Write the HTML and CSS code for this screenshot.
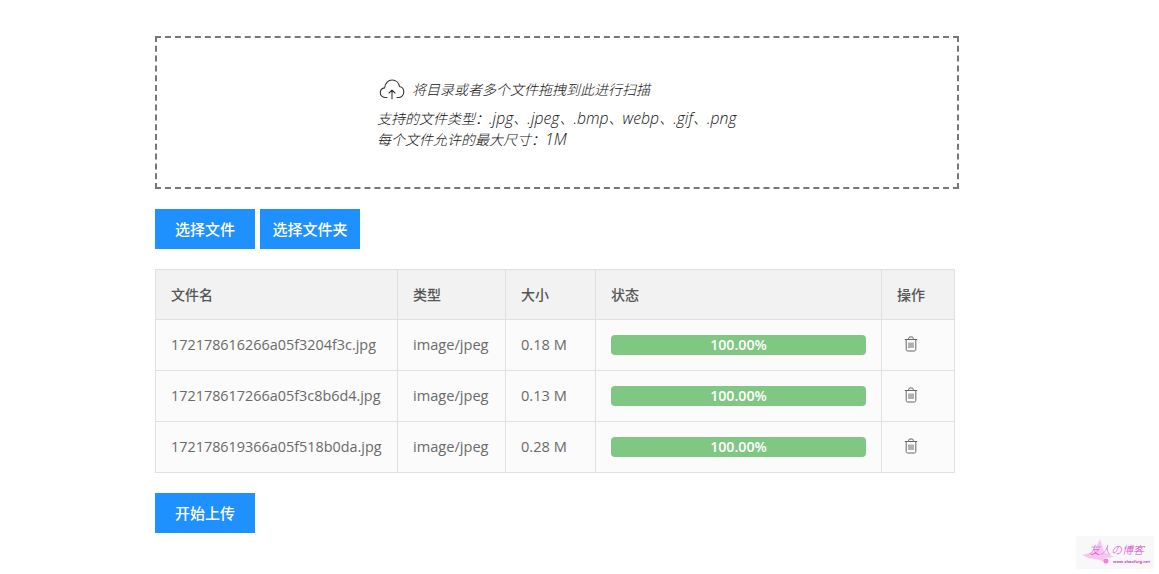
FILE: index.html
```html
<!DOCTYPE html>
<html lang="zh-CN">
<head>
<meta charset="utf-8">
<title>文件上传</title>
<link rel="stylesheet" href="styles.css">
</head>
<body>
<main class="page">
  <section class="drop">
    <div class="drop-inner">
      <p class="drop-title">
        <svg class="cloud" viewBox="0 0 26 22" width="26" height="22" fill="none" stroke="#333" stroke-width="1.1" stroke-linecap="round" stroke-linejoin="round"><path d="M8 19.500H6.500C3.500 19.500 1.300 17.400 1.300 14.700c0-2.500 1.800-4.400 4.300-4.800C6.100 5.300 9.300 2 13.200 2c3.700 0 6.700 2.800 7.300 6.500 2.600.5 4.300 2.700 4.300 5.400 0 3-2.300 5.600-5.300 5.600h-1.500"/><path d="M13 20.800v-8M10 15l3-2.800 3 2.800"/></svg>
        <span>将目录或者多个文件拖拽到此进行扫描</span>
      </p>
      <p class="drop-line">支持的文件类型：<span class="lat">.jpg</span>、<span class="lat">.jpeg</span>、<span class="lat">.bmp</span>、<span class="lat">webp</span>、<span class="lat">.gif</span>、<span class="lat">.png</span></p>
      <p class="drop-line">每个文件允许的最大尺寸：<span class="lat">1M</span></p>
    </div>
  </section>

  <div class="actions">
    <button class="btn" type="button">选择文件</button>
    <button class="btn" type="button">选择文件夹</button>
  </div>

  <table class="files">
    <colgroup>
      <col class="c-name"><col class="c-type"><col class="c-size"><col class="c-state"><col class="c-op">
    </colgroup>
    <thead>
      <tr><th>文件名</th><th>类型</th><th>大小</th><th>状态</th><th>操作</th></tr>
    </thead>
    <tbody>
      <tr>
        <td class="name">172178616266a05f3204f3c.jpg</td><td>image/jpeg</td><td>0.18 M</td>
        <td><div class="bar">100.00%</div></td>
        <td><svg class="trash" viewBox="0 0 14 16" width="14" height="16" fill="none" stroke="#666" stroke-width="1"><path d="M.8 3.500h12.400M4.700 3.500V2.200c0-.7.500-1.200 1.200-1.200h2.200c.7 0 1.200.5 1.200 1.200v1.300M2.200 3.500v10c0 .9.600 1.500 1.500 1.500h6.600c.9 0 1.500-.6 1.500-1.500v-10M5 6.500v5.500M7 6.500v5.500M9 6.500v5.500"/></svg></td>
      </tr>
      <tr>
        <td class="name">172178617266a05f3c8b6d4.jpg</td><td>image/jpeg</td><td>0.13 M</td>
        <td><div class="bar">100.00%</div></td>
        <td><svg class="trash" viewBox="0 0 14 16" width="14" height="16" fill="none" stroke="#666" stroke-width="1"><path d="M.8 3.500h12.400M4.700 3.500V2.200c0-.7.500-1.200 1.200-1.200h2.200c.7 0 1.200.5 1.200 1.200v1.300M2.200 3.500v10c0 .9.600 1.500 1.500 1.500h6.600c.9 0 1.500-.6 1.500-1.500v-10M5 6.500v5.500M7 6.500v5.500M9 6.500v5.500"/></svg></td>
      </tr>
      <tr>
        <td class="name">172178619366a05f518b0da.jpg</td><td>image/jpeg</td><td>0.28 M</td>
        <td><div class="bar">100.00%</div></td>
        <td><svg class="trash" viewBox="0 0 14 16" width="14" height="16" fill="none" stroke="#666" stroke-width="1"><path d="M.8 3.500h12.400M4.700 3.500V2.200c0-.7.500-1.200 1.200-1.200h2.200c.7 0 1.200.5 1.200 1.200v1.300M2.200 3.500v10c0 .9.600 1.500 1.500 1.500h6.600c.9 0 1.500-.6 1.500-1.500v-10M5 6.500v5.500M7 6.500v5.500M9 6.500v5.500"/></svg></td>
      </tr>
    </tbody>
  </table>

  <div class="actions">
    <button class="btn" type="button">开始上传</button>
  </div>
</main>

<aside class="mark">
  <svg class="mark-art" viewBox="0 0 78 33" width="78" height="33"><path d="M6 19 L18 16 L24 3 L28 16 L38 21 L28 22 L31 28 L24 24 L12 22 Z" fill="#f8c4f0"/><circle cx="30" cy="25" r="2.500" fill="#f37fdf"/></svg>
  <span class="mark-title">友人の博客</span>
  <span class="mark-url">www.shaoforg.net</span>
</aside>
</body>
</html>
```

FILE: styles.css
```css
* { box-sizing: border-box; }

html, body { margin: 0; height: 100%; }

body {
  background: #fff;
  color: #333;
  font-family: "Open Sans", "Noto Sans CJK SC", sans-serif;
  font-size: 14.6px;
  overflow: hidden;
}

.page {
  width: 804px;
  margin-left: 155px;
  padding-top: 36px;
}

.drop {
  height: 153px;
  border: 2px dashed #777;
  display: flex;
  justify-content: center;
}

.drop-inner {
  width: 360px;
  padding-top: 38px;
  font-size: 14px;
  font-style: italic;
  font-weight: 300;
  color: #111;
  white-space: nowrap;
}

.drop-title {
  margin: 0 0 6px 2px;
  display: flex;
  align-items: center;
  gap: 7px;
  height: 26px;
}

.drop-line {
  margin: 0;
  line-height: 21px;
}

.lat { font-size: 15.8px; }

.cloud { flex: none; }

.actions {
  display: flex;
  gap: 5px;
  margin-top: 20px;
}

.btn {
  width: 100px;
  height: 40px;
  padding: 0 0 2px;
  border: 0;
  background: #1e90ff;
  color: #fff;
  font: 500 15px "Open Sans", "Noto Sans CJK SC", sans-serif;
}

.files {
  width: 799px;
  margin-top: 20px;
  border-collapse: collapse;
  table-layout: fixed;
  color: #6a6a6a;
}

.c-name { width: 242px; }
.c-type { width: 108px; }
.c-size { width: 90px; }
.c-state { width: 286px; }
.c-op { width: 73px; }

.files th, .files td {
  border: 1px solid #e0e0e0;
  padding: 0 15px 2px;
  text-align: left;
  white-space: nowrap;
}

.files th {
  height: 50px;
  background: #f2f2f2;
  font-size: 14px;
  font-weight: 500;
  color: #555;
}

.files td {
  height: 51px;
  background: #fbfbfb;
}

.files .name { font-size: 14.4px; }

.bar {
  height: 20px;
  line-height: 19px;
  margin-top: 2px;
  border-radius: 4px;
  background: #81c784;
  color: #fff;
  font-size: 14.2px;
  font-weight: 600;
  text-align: center;
}

.trash {
  display: block;
  margin-left: 7px;
}

.mark {
  position: absolute;
  left: 1076px;
  top: 536px;
  width: 78px;
  height: 33px;
  background: #f8f8f8;
  overflow: hidden;
}

.mark-art {
  position: absolute;
  left: 0;
  top: 0;
}

.mark-title {
  position: absolute;
  left: 13px;
  top: 7px;
  font-family: "Noto Sans CJK SC", sans-serif;
  font-size: 11px;
  line-height: 13px;
  font-style: italic;
  font-weight: 300;
  color: #e23ad0;
  white-space: nowrap;
}

.mark-url {
  position: absolute;
  left: 37px;
  top: 23px;
  font-family: "Open Sans", sans-serif;
  font-size: 4px;
  line-height: 6px;
  font-weight: 700;
  color: #d63fb5;
  white-space: nowrap;
}
```
